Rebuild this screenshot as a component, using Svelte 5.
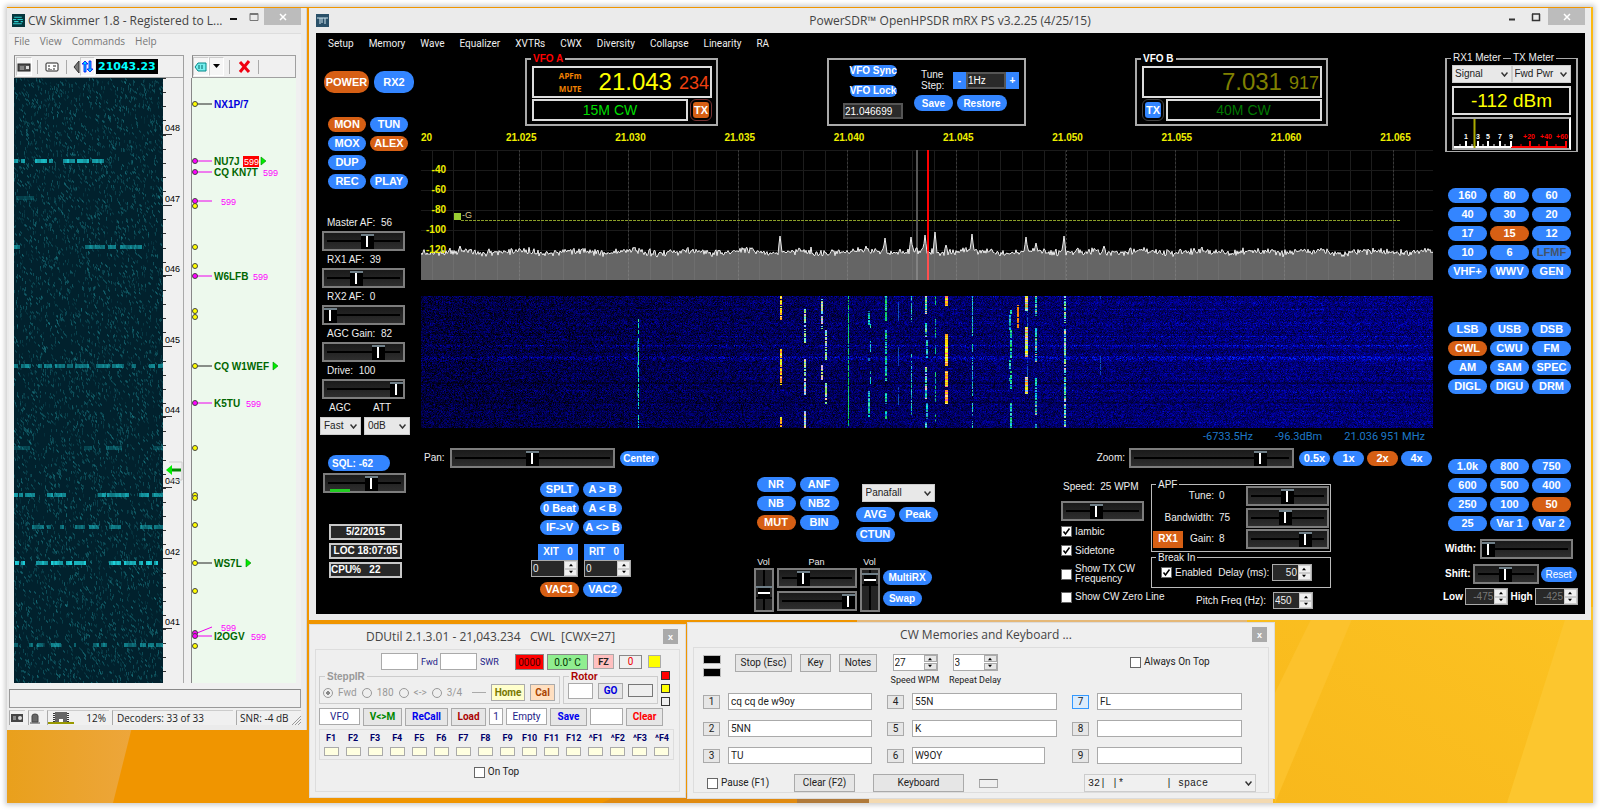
<script>
  import { onMount } from 'svelte'

  const skimMenu = ['File', 'View', 'Commands', 'Help']
  const sdrMenu = ['Setup', 'Memory', 'Wave', 'Equalizer', 'XVTRs', 'CWX', 'Diversity', 'Collapse', 'Linearity', 'RA']

  const modes = ['MON*', 'TUN', 'MOX', 'ALEX*', 'DUP', '', 'REC', 'PLAY']
  const bands = ['160', '80', '60', '40', '30', '20', '17', '15*', '12', '10', '6', 'LFMF-', 'VHF+', 'WWV', 'GEN']
  const demods = ['LSB', 'USB', 'DSB', 'CWL*', 'CWU', 'FM', 'AM', 'SAM', 'SPEC', 'DIGL', 'DIGU', 'DRM']
  const filters = ['1.0k', '800', '750', '600', '500', '400', '250', '100', '50*', '25', 'Var 1', 'Var 2']
  const vfoOps = ['SPLT', 'A > B', '0 Beat', 'A < B', 'IF->V', 'A <> B']
  const noise = ['NR', 'ANF', 'NB', 'NB2', 'MUT*', 'BIN']
  const zooms = ['0.5x', '1x', '2x*', '4x']

  const gains = [
    ['Master AF:', 56, 56],
    ['RX1 AF:', 39, 39],
    ['RX2 AF:', 0, 0],
    ['AGC Gain:', 82, 73],
    ['Drive:', 100, 100]
  ]
  const apf = [
    ['Tune:', 0, 50],
    ['Bandwidth:', 75, 47],
    ['Gain:', 8, 78]
  ]

  const freqs = ['20', '21.025', '21.030', '21.035', '21.040', '21.045', '21.050', '21.055', '21.060', '21.065']
  const levels = [-40, -60, -80, -100, -120]
  const fkeys = ['F1', 'F2', 'F3', 'F4', 'F5', 'F6', 'F7', 'F8', 'F9', 'F10', 'F11', 'F12', '^F1', '^F2', '^F3', '^F4']

  const memories = [
    [['1', 'cq cq de w9oy'], ['4', '55N'], ['7', 'FL']],
    [['2', '5NN'], ['5', 'K'], ['8', '']],
    [['3', 'TU'], ['6', 'W9OY'], ['9', '']]
  ]

  // decoded stations on the band map: y, dot colour, call, report
  const spots = [
    { y: 26, call: 'NX1P/7', fill: '#00d' },
    { y: 83, m: true, call: 'NU7J', report: '599', hot: true, x: 52, arrow: 69 },
    { y: 94, m: true, call: 'CQ KN7T', report: '599', x: 71 },
    { y: 123, m: true, report: '599', x: 29 },
    { y: 128 }, { y: 169 }, { y: 188 },
    { y: 198, m: true, call: 'W6LFB', report: '599', x: 61 },
    { y: 233 }, { y: 239 },
    { y: 288, call: 'CQ W1WEF', arrow: 81 },
    { y: 325, m: true, call: 'K5TU', report: '599', x: 54 },
    { y: 370 }, { y: 417 }, { y: 420 }, { y: 447 },
    { y: 485, call: 'WS7L', arrow: 54 },
    { y: 513 },
    { y: 555, m: true, report: '599', x: 29, up: true },
    { y: 558, m: true, call: 'I2OGV', report: '599', x: 59 },
    { y: 568 }
  ]

  const ticks = Array.from({ length: 43 }, (_, i) => Math.round(i * 14.13))

  let skimCanvas
  let fallCanvas

  function rng(seed) {
    let s = seed
    return () => {
      s = (s * 1664525 + 1013904223) >>> 0
      return s / 4294967296
    }
  }

  // noise floor plus a few carriers
  const peaks = { 359: 16, 445: 6, 464: 14, 490: 15, 504: 17, 514: 20, 525: 7, 551: 18, 605: 15, 615: 9, 643: 16, 683: 6, 39: 6 }
  const trace = (() => {
    const r = rng(7)
    const pts = []
    for (let x = 0; x <= 1012; x += 1) {
      let y = 102 + Math.sin(x / 9) * 1.2 + (r() - 0.5) * 4 + (r() - 0.5) * 5
      if (peaks[x]) y = 102 - peaks[x]
      else if (peaks[x - 1] || peaks[x + 1]) y = 102 - (peaks[x - 1] || peaks[x + 1]) / 2
      pts.push(`${x},${y.toFixed(1)}`)
    }
    return pts.join(' ')
  })()

  const majors = Array.from({ length: 9 }, (_, i) => Math.round(98 + i * 109.3))
  const minors = Array.from({ length: 46 }, (_, i) => Math.round(10.5 + i * 21.86))

  function drawSkimmer() {
    const c = skimCanvas.getContext('2d')
    const r = rng(21)
    c.fillStyle = '#01212d'
    c.fillRect(0, 0, 149, 605)
    for (let i = 0; i < 5600; i++) {
      const x = r() * 149, y = r() * 605
      c.fillStyle = `rgba(30,135,145,${0.1 + r() * 0.36})`
      if (r() < 0.5) c.fillRect(x | 0, y | 0, 1, 2 + r() * 2)
      else {
        c.fillRect(x | 0, y | 0, 1, 2)
        c.fillRect((x | 0) + 1, (y | 0) + 1, 1, 2)
      }
    }
    const keyed = [
      [83, 0.9, [[0, 3], [7, 11], [21, 32], [35, 39], [49, 61], [63, 74], [78, 90]]],
      [169, 0.6, [[0, 6], [71, 91], [94, 102], [106, 127]]],
      [120, 0.25, [[2, 20]]],
      [288, 0.6, [[0, 4], [7, 17], [24, 28], [30, 38], [41, 50], [53, 59], [61, 74], [82, 95], [98, 109], [118, 121], [135, 141], [144, 149]]],
      [370, 0.3, [[0, 16], [70, 78], [92, 108], [139, 149]]],
      [417, 0.75, [[0, 4], [5, 9], [11, 20], [33, 38], [40, 51], [84, 91], [93, 115], [125, 135], [138, 149]]],
      [449, 0.55, [[18, 29], [33, 37], [46, 50], [61, 70], [75, 85], [95, 107], [126, 137], [140, 149]]],
      [485, 1, [[1, 4], [7, 10], [22, 34], [37, 49], [52, 57], [60, 72], [95, 107], [110, 121], [125, 129], [132, 137], [140, 144]]],
      [567, 0.55, [[0, 3], [15, 19], [23, 28], [37, 47], [60, 62], [79, 84], [87, 92], [110, 122], [126, 131], [134, 139], [142, 149]]]
    ]
    for (const [y, a, runs] of keyed) {
      for (const [from, to] of runs) {
        for (let x = from; x < to; x += 2) {
          c.fillStyle = `rgba(30,210,220,${a * (0.6 + r() * 0.4)})`
          c.fillRect(x, y - 2, 2, 4)
        }
      }
    }
  }

  const warm = ['#ffe100', '#ff9a1f', '#ffd000', '#d9ff2e', '#ff7a3c', '#ffe98a']
  const pale = ['#7ff0c8', '#c9e86a', '#b9a6ff', '#5ad0ff', '#ffc8a0', '#7fe060']
  const cool = ['#00d6e8', '#2aa6e0', '#19c07a', '#0f70c0', '#3fe0c0']
  const green = ['#10c83a', '#1ad070', '#00b8a0', '#22e060']
  const dim = ['#0b3cc0', '#0d50b0', '#1060c0']
  const carriers = [
    [217, ['#00e8c0', '#20e0a0', '#00c0f0', '#40f080'], 1, [[23, 38], [42, 86], [88, 113], [119, 132]]],
    [216, dim, 1, [[45, 56], [66, 76], [94, 100]]],
    [359, warm, 2, [[0, 25], [53, 89], [121, 132]]],
    [383, pale, 2, [[13, 47], [63, 99], [115, 132]]],
    [400, pale, 2, [[3, 33], [68, 84]]],
    [404, pale, 2, [[34, 52], [53, 64], [87, 109]]],
    [427, green, 1, [[0, 130]]],
    [447, cool, 2, [[15, 30], [62, 65], [95, 121]]],
    [449, cool, 1, [[28, 32], [45, 57], [75, 88]]],
    [464, green.concat(cool), 2, [[0, 25], [34, 80], [82, 85], [96, 108], [115, 123]]],
    [477, dim, 1, [[6, 26], [50, 70], [90, 110]]],
    [490, cool, 1, [[0, 26], [58, 62], [65, 119]]],
    [504, cool.concat(pale), 2, [[0, 19], [27, 41], [71, 103], [126, 132]]],
    [505, cool, 2, [[44, 62], [107, 123]]],
    [514, dim.concat(green), 1, [[0, 9], [23, 42], [48, 58], [76, 106], [118, 126]]],
    [524, warm.concat('#ff5fa0'), 3, [[0, 10], [38, 70], [75, 91], [94, 108]]],
    [551, cool, 1, [[0, 40], [48, 56], [60, 100], [107, 120], [125, 132]]],
    [588, cool, 2, [[19, 34], [63, 74], [82, 85]]],
    [589, cool.concat(green), 2, [[14, 18], [34, 62], [75, 95], [107, 132]]],
    [596, ['#ff9000', '#e07818', '#ff7800'], 2, [[9, 32]]],
    [604, warm.concat(pale), 3, [[0, 15], [31, 61], [81, 98]]],
    [606, dim, 1, [[15, 31], [62, 81]]],
    [614, cool.concat('#d0b080'), 2, [[0, 21], [31, 67], [82, 119], [128, 132]]],
    [643, cool.concat(pale), 2, [[0, 27], [33, 62], [63, 132]]],
    [679, dim, 1, [[0, 4], [60, 80]]]
  ]

  function drawWaterfall() {
    const c = fallCanvas.getContext('2d')
    const r = rng(99)
    const img = c.createImageData(1012, 132)
    const streaks = { 0: 0.3, 13: 0.1, 27: 0.22, 40: 0.35, 49: 0.35, 50: 0.25, 60: 0.3, 61: 0.4, 62: 0.4, 63: 0.35, 64: 0.25, 86: -0.25, 87: -0.25, 106: -0.2, 107: -0.2, 10: -0.15, 37: -0.2, 94: 0.15 }
    for (let y = 0; y < 132; y++) {
      const row = 0.8 + (r() - 0.5) * 0.2 + (streaks[y] || 0)
      for (let x = 0; x < 1012; x++) {
        const lift = 56 + 60 * Math.min(1, x / 850)
        const v = row * (lift + (r() + r() - 0.9) * 92)
        const i = (y * 1012 + x) * 4
        const b = Math.max(0, Math.min(255, v * 1.2))
        img.data[i] = 0
        img.data[i + 1] = b > 180 ? (b - 180) / 2 : 0
        img.data[i + 2] = b
        img.data[i + 3] = 255
      }
    }
    c.putImageData(img, 0, 0)
    for (const [x, palette, w, runs] of carriers) {
      for (const [from, to] of runs) {
        for (let y = from; y < to; y++) {
          if (w < 3 && r() < 0.15) continue
          c.fillStyle = palette[Math.floor(r() * palette.length)]
          c.fillRect(x, y, w, 1)
        }
      }
    }
  }

  onMount(() => {
    drawSkimmer()
    drawWaterfall()
  })
</script>

{#snippet pill(name)}
  {#if name}
    <button class="pill" class:on={name.endsWith('*')} disabled={name.endsWith('-')}>{name.replace(/[*-]$/, '')}</button>
  {:else}
    <span></span>
  {/if}
{/snippet}

{#snippet slider(label, value)}
  <input class="slider" type="range" min="0" max="100" {value} aria-label={label} />
{/snippet}

{#snippet spin(label, value, off)}
  <span class="spin" class:off>
    <input type="text" {value} aria-label={label} />
    <span class="arrows">
      <button aria-label="{label} up"><svg viewBox="0 0 8 6"><path d="M1 5L4 1L7 5Z" /></svg></button>
      <button aria-label="{label} down"><svg viewBox="0 0 8 6"><path d="M1 1L4 5L7 1Z" /></svg></button>
    </span>
  </span>
{/snippet}

<div class="desktop">
  <svg class="wallpaper" viewBox="0 0 1586 796" preserveAspectRatio="none" aria-hidden="true">
    <defs>
      <linearGradient id="left" x1="0" x2="1">
        <stop offset="0" stop-color="#e9a01c" />
        <stop offset="1" stop-color="#eda63c" />
      </linearGradient>
      <linearGradient id="right" x1="0" y1="1" x2="1" y2="0">
        <stop offset="0" stop-color="#f8b81c" />
        <stop offset="1" stop-color="#fcc322" />
      </linearGradient>
    </defs>
    <rect width="1586" height="796" fill="#f09500" />
    <path d="M0 700H130L106 796H0Z" fill="url(#left)" />
    <path d="M595 796L615 786H790V796Z" fill="#e08a10" />
    <path d="M790 786H862V796H790Z" fill="#b07a3a" />
    <path d="M862 786H1270V796H862Z" fill="#f3d9b0" />
    <path d="M850 600H1260V630H850Z" fill="#e5b878" />
    <path d="M1240 600H1586V786H1270V796H1586V786H1240Z" fill="url(#right)" />
    <path d="M1266 600H1586V796H1266Z" fill="url(#right)" />
    <path d="M1266 690L1310 600H1350L1268 796Z" fill="#fcc22c" />
    <path d="M1562 600H1586V796H1500Z" fill="#fcc62e" />
    <path d="M1583 0H1586V600H1583Z" fill="#fcb912" />
  </svg>

  <section class="win skimmer">
    <header>
      <svg class="app" viewBox="0 0 12 12"><rect width="12" height="12" fill="#05363c" /><path d="M2 3H9M1 5H4M5 5H10M2 7H6M8 7H10M1 9H9" stroke="#2fd0d0" stroke-width="1" /></svg>
      <h2>CW Skimmer 1.8 - Registered to L...</h2>
      <button class="cap" aria-label="Minimize"><svg viewBox="0 0 10 10"><path d="M1 7H8" stroke="#111" stroke-width="2" /></svg></button>
      <button class="cap" aria-label="Maximize"><svg viewBox="0 0 10 10"><path d="M1 1.5H9V8.500H1Z M1 2.500H9" fill="none" stroke="#777" /></svg></button>
      <button class="cap close" aria-label="Close"><svg viewBox="0 0 10 10"><path d="M2 2L8 8M8 2L2 8" stroke="#fff" stroke-width="1.500" /></svg></button>
    </header>
    <div class="skimBody">
      <nav>{#each skimMenu as m}<button>{m}</button>{/each}</nav>
      <div class="tools">
        <div class="toolbar main">
          <button class="down" aria-label="Radio"><svg width="14" height="10" viewBox="0 0 14 10"><rect x="1" y="2" width="12" height="7" fill="#555" stroke="#222" /><path d="M3 5H7M3 7H7" stroke="#bbb" /><rect x="9" y="4" width="3" height="3" fill="#ddd" /></svg></button>
          <i></i>
          <button aria-label="Recorder"><svg width="14" height="10" viewBox="0 0 14 10"><rect x="1" y="1" width="12" height="8" rx="1" fill="#fff" stroke="#222" /><path d="M3 4H5M8 4H11M4 6V8M6 7V8M9 6V8" stroke="#222" /></svg></button>
          <i></i>
          <svg width="8" height="14" viewBox="0 0 8 14"><path d="M7 1L2 7L7 13Z" fill="#777" stroke="#333" /></svg>
          <button class="down" aria-label="Swap"><svg width="13" height="13" viewBox="0 0 13 13"><path d="M4 1L1 4H3V12H5V4H7Z" fill="#0cf" stroke="#00f" stroke-width=".8" /><path d="M9 12L6 9H8V1H10V9H12Z" fill="#0cf" stroke="#00f" stroke-width=".8" /></svg></button>
          <output>21043.23</output>
        </div>
        <div class="toolbar">
          <button class="down" aria-label="Tag"><svg width="14" height="10" viewBox="0 0 14 10"><path d="M1 5L4 1H12V9H4Z" fill="#7ee" stroke="#088" /><path d="M4 4H10M4 6H10" stroke="#066" stroke-dasharray="2 1" /></svg></button>
          <button class="down" aria-label="Tag menu"><svg width="7" height="5" viewBox="0 0 7 5"><path d="M0 0H7L3.500 4Z" /></svg></button>
          <i></i>
          <button aria-label="Delete"><svg width="13" height="13" viewBox="0 0 13 13"><path d="M2 2L11 12M11 1L2 12" stroke="#f00010" stroke-width="3" /></svg></button>
          <i></i>
        </div>
      </div>
      <div class="maps">
        <canvas bind:this={skimCanvas} width="149" height="605"></canvas>
        <svg class="scale" viewBox="0 0 20 605">
          {#each ticks as t}<path d="M0 {t + 0.5}H3" stroke="#333" />{/each}
          {#each ['048', '047', '046', '045', '044', '043', '042', '041'] as t, i}
            <path d="M0 {Math.round(56 + i * 70.6) + 0.5}H9" stroke="#333" />
            <text x="2" y={Math.round(53 + i * 70.6)}>{t}</text>
          {/each}
          <path d="M6 384H19V402H6" fill="none" stroke="#ccc" />
          <path d="M3 392L9 387V397Z" fill="#0e0" /><path d="M9 392H18" stroke="#080" stroke-width="3" />
        </svg>
        <svg class="spots" viewBox="0 0 104 605">
          {#each spots as s}
            {#if s.call || s.report}
              <path d={s.up ? `M5 ${s.y}L20 ${s.y - 6}` : `M5 ${s.y}H20`} stroke={s.m ? '#e0e' : '#222'} />
            {/if}
            <circle cx="3" cy={s.y} r="2.500" fill={s.m ? '#f0f' : '#ff0'} stroke="#444" />
            {#if s.call}<text class="call" x="22" y={s.y + 4} fill={s.fill ?? '#060'}>{s.call}</text>{/if}
            {#if s.hot}<rect x="51" y={s.y - 5} width="16" height="11" fill="#f00" />{/if}
            {#if s.report}<text x={s.x} y={s.up ? s.y - 2 : s.y + 4} fill={s.hot ? '#fff' : '#f0f'} style:font-size="9px">{s.report}</text>{/if}
            {#if s.arrow}<path d="M{s.arrow} {s.y - 4}L{s.arrow + 5} {s.y}L{s.arrow} {s.y + 4}Z" fill="#0e0" stroke="#080" stroke-width=".6" />{/if}
          {/each}
        </svg>
      </div>
      <div class="well"></div>
      <footer>
        <span><svg width="14" height="10" viewBox="0 0 14 10"><rect x="1" y="1" width="12" height="8" fill="#444" /><path d="M3 4H6M3 6H6" stroke="#ccc" /><circle cx="10" cy="5" r="2" fill="#ddd" /></svg></span>
        <span><svg width="12" height="11" viewBox="0 0 12 11"><path d="M1 10H11M3 9V3Q3 1 6 1Q9 1 9 3V9Z" fill="#666" stroke="#444" /></svg></span>
        <span class="cpu"><svg width="26" height="12" viewBox="0 0 26 12"><path d="M0 11H26" stroke="#990" stroke-width="2" /><path d="M7 0V10H19V0Z" fill="#666" /><path d="M6 1V10M20 1V10" stroke="#333" stroke-width="2" stroke-dasharray="1 1" /><path d="M11 10V7H15V10Z" fill="#fff" /></svg>12%</span>
        <span class="dec">Decoders: 33 of 33</span>
        <span class="snr">SNR: -4 dB<svg class="grip" width="10" height="10" viewBox="0 0 10 10"><path d="M1 10L10 1M4 10L10 4M7 10L10 7" stroke="#999" /></svg></span>
      </footer>
    </div>
  </section>

  <div class="rest">
    <section class="win sdr">
      <header>
        <svg class="app" viewBox="0 0 13 13"><rect width="13" height="13" fill="#2a5068" /><path d="M1 4H12M4 4V10M6 4V9M9 4V10" stroke="#cfe4ee" fill="none" /></svg>
        <h2>PowerSDR™ OpenHPSDR mRX PS v3.2.25 (4/25/15)</h2>
        <button class="cap" aria-label="Minimize"><svg viewBox="0 0 10 10"><path d="M2 7.500H8" stroke="#333" stroke-width="2" /></svg></button>
        <button class="cap" aria-label="Maximize"><svg viewBox="0 0 10 10"><path d="M1.500 2V8.500H8.500V2M1 2H9" fill="none" stroke="#333" stroke-width="1.500" /></svg></button>
        <button class="cap close" aria-label="Close"><svg viewBox="0 0 10 10"><path d="M2 2L8 8M8 2L2 8" stroke="#fff" stroke-width="1.500" /></svg></button>
      </header>
      <div class="console">
        <nav>{#each sdrMenu as m}<button>{m}</button>{/each}</nav>
        <div class="columns">
          <div class="left">
            <div class="power"><button class="pill on">POWER</button><button class="pill">RX2</button></div>
            <div class="pair modes">{#each modes as b}{@render pill(b)}{/each}</div>
            <div class="gains">
              {#each gains as [name, shown, pos]}
                <span>{name}&nbsp; {shown}</span>
                {@render slider(name, pos)}
              {/each}
            </div>
            <div class="agc">
              <label for="agc">AGC</label><label for="att">ATT</label>
              <select id="agc"><option>Fast</option></select>
              <select id="att"><option>0dB</option></select>
            </div>
            <div class="sql">
              <button class="pill">SQL: -62</button>
              <div class="sqlbar">{@render slider('Squelch', 61)}</div>
            </div>
            <div class="clock">
              <output>5/2/2015</output>
              <output>LOC 18:07:05</output>
              <output class="cpuload">CPU%&nbsp;&nbsp; 22</output>
            </div>
          </div>

          <div class="center">
            <div class="vfos">
              <fieldset class="vfo">
                <legend class="red">VFO A</legend>
                <div class="freq"><small>APFm<br />MUTE</small><b>21.043</b><em>234</em></div>
                <div class="band"><output>15M CW</output><button class="tx on">TX</button></div>
              </fieldset>
              <div class="memory">
                <div class="locks">
                  <button class="pill">VFO Sync</button>
                  <button class="pill">VFO Lock</button>
                  <input type="text" value="21.046699" aria-label="Saved frequency" />
                </div>
                <div class="tune">
                  <div class="step"><span>Tune<br />Step:</span><button>-</button><input type="text" value="1Hz" aria-label="Tune step" /><button>+</button></div>
                  <div class="save"><button class="pill">Save</button><button class="pill wide">Restore</button></div>
                </div>
              </div>
              <fieldset class="vfo b">
                <legend>VFO B</legend>
                <div class="freq"><b>7.031</b><em>917</em></div>
                <div class="band"><button class="tx">TX</button><output>40M CW</output></div>
              </fieldset>
            </div>

            <div class="freqs">{#each freqs as f}<span>{f}</span>{/each}</div>
            <div class="pan">
              <svg viewBox="0 0 1012 130" preserveAspectRatio="none">
                {#each minors as x}<path d="M{x + 0.5} 0V130" stroke="#1d1d1d" />{/each}
                {#each [0.5, 20.5, 40.5, 60.5, 80.5, 100.5] as y}<path d="M0 {y}H1012" stroke="#1a1a1a" />{/each}
                {#each majors as x}<path d="M{x + 0.5} 0V130" stroke="#3a3a3a" stroke-dasharray="2 2" />{/each}
                <path d="M40 70.500H979" stroke="#8a9e28" stroke-dasharray="3 1" />
                <rect x="33" y="63" width="7" height="7" fill="#9acd32" />
                <path d="M496 0V130" stroke="#555" stroke-width="2" />
                <polygon points="0,130 {trace} 1012,130" fill="#999" fill-opacity=".66" />
                <polyline points={trace} fill="none" stroke="#eee" />
                <path d="M507 0V130" stroke="#f00" stroke-width="2" />
                <path d="M507 101V130" stroke="#ff5050" stroke-width="2" />
              </svg>
              <div class="levels">{#each levels as l}<span>{l}</span>{/each}</div>
              <span class="gmark">-G</span>
            </div>
            <canvas class="fall" bind:this={fallCanvas} width="1012" height="132"></canvas>
            <div class="readout"><span>-6733.5Hz</span><span>-96.3dBm</span><span>21.036 951 MHz</span></div>

            <div class="panzoom">
              <span>Pan:</span>{@render slider('Pan', 50)}<button class="pill">Center</button>
              <span class="zl">Zoom:</span>{@render slider('Zoom', 83)}
              <div class="zooms">{#each zooms as b}{@render pill(b)}{/each}</div>
            </div>

            <div class="lower">
              <div class="ops">
                <div class="pair">{#each vfoOps as b}{@render pill(b)}{/each}</div>
                <div class="rits">
                  {#each ['XIT', 'RIT'] as n}
                    <div><button class="rit">{n}&nbsp;&nbsp;&nbsp;0</button>{@render spin(n, '0')}</div>
                  {/each}
                </div>
                <div class="pair vac">{@render pill('VAC1*')}{@render pill('VAC2')}</div>
              </div>

              <div class="dsp">
                <div class="dspTop">
                  <div class="pair">{#each noise as b}{@render pill(b)}{/each}</div>
                  <div class="display">
                    <select aria-label="Display"><option>Panafall</option></select>
                    <div class="pair">{@render pill('AVG')}{@render pill('Peak')}</div>
                    {@render pill('CTUN')}
                  </div>
                </div>
                <div class="mixer">
                  <div class="vol"><span>Vol</span><input class="slider vert" type="range" value="40" aria-label="Main volume" /></div>
                  <div class="pans"><span>Pan</span>{@render slider('Main pan', 29)}{@render slider('Sub pan', 100)}</div>
                  <div class="vol"><span>Vol</span><input class="slider vert" type="range" value="90" aria-label="Sub volume" /></div>
                  <div class="multi"><button class="pill">MultiRX</button><button class="pill swap">Swap</button></div>
                </div>
              </div>

              <div class="cw">
                <div class="keyer">
                  <span>Speed:&nbsp; 25 WPM</span>
                  {@render slider('Speed', 41)}
                  <label><input type="checkbox" checked />Iambic</label>
                  <label><input type="checkbox" checked />Sidetone</label>
                  <label class="two"><input type="checkbox" />Show TX CW Frequency</label>
                  <label class="one"><input type="checkbox" />Show CW Zero Line</label>
                </div>
                <div class="filtering">
                  <fieldset class="apf">
                    <legend>APF</legend>
                    {#each apf as [name, v, pos]}
                      <div>{#if name === 'Gain:'}<button>RX1</button>{/if}<span class="n">{name}</span><span class="v">{v}</span>{@render slider(name, pos)}</div>
                    {/each}
                  </fieldset>
                  <fieldset class="breakin">
                    <legend>Break In</legend>
                    <label><input type="checkbox" checked />Enabled</label>
                    <span>Delay (ms):</span>{@render spin('Delay', '50')}
                  </fieldset>
                  <div class="pitch"><span>Pitch Freq (Hz):</span>{@render spin('Pitch', '450')}</div>
                </div>
              </div>
            </div>
          </div>

          <div class="right">
            <fieldset class="meter">
              <legend>RX1 Meter</legend><legend class="txm">TX Meter</legend>
              <div class="pick">
                <select aria-label="RX1 meter"><option>Signal</option></select>
                <select aria-label="TX meter"><option>Fwd Pwr</option></select>
              </div>
              <output>-112 dBm</output>
              <svg viewBox="0 0 115 29">
                <path d="M0 28H57" stroke="#fff" stroke-width="2" /><path d="M57 28H113" stroke="#f00" stroke-width="2" />
                <path d="M12 22V28M24 22V28M34 22V28M46 22V28M57 22V28" stroke="#fff" stroke-width="2" />
                <path d="M6 25V28M18 25V28M29 25V28M40 25V28M51 25V28" stroke="#fff" />
                <path d="M76 22V28M93 22V28M112 22V28" stroke="#f00" stroke-width="2" />
                <path d="M67 25V28M85 25V28M102 25V28" stroke="#f00" />
                {#each [['1', 12], ['3', 24], ['5', 34], ['7', 46], ['9', 57]] as [t, x]}<text {x} y="20" fill="#fff">{t}</text>{/each}
                {#each [['+20', 75], ['+40', 92], ['+60', 108]] as [t, x]}<text {x} y="20" fill="#f00">{t}</text>{/each}
                <path d="M20.500 0V29" stroke="#aa0" stroke-width="2" />
              </svg>
            </fieldset>
            <div class="triple bands">{#each bands as b}{@render pill(b)}{/each}</div>
            <div class="triple demods">{#each demods as b}{@render pill(b)}{/each}</div>
            <div class="triple filters">{#each filters as b}{@render pill(b)}{/each}</div>
            <div class="line width"><b>Width:</b>{@render slider('Width', 0)}</div>
            <div class="line shift"><b>Shift:</b>{@render slider('Shift', 50)}<button class="pill">Reset</button></div>
            <div class="line lowhigh"><b>Low</b>{@render spin('Low', '-475', true)}<b>High</b>{@render spin('High', '-425', true)}</div>
          </div>
        </div>
      </div>
    </section>

    <div class="bottom">
      <section class="win ddutil">
        <header><h2>DDUtil 2.1.3.01 - 21,043.234 &nbsp; CWL &nbsp;[CWX=27]</h2><button class="x" aria-label="Close">x</button></header>
        <div class="panel">
          <div class="row1">
            <input type="text" aria-label="Forward power" /><span>Fwd</span>
            <input type="text" aria-label="SWR" /><span>SWR</span>
            <output class="fault">0000</output><output class="temp">0.0° C</output>
            <button class="fz">FZ</button><output class="zero">0</output><i class="lamp yel"></i>
          </div>
          <div class="row2">
            <fieldset class="stepp" disabled>
              <legend>SteppIR</legend>
              <label><input type="radio" name="dir" checked />Fwd</label>
              <label><input type="radio" name="dir" />180</label>
              <label><input type="radio" name="dir" />&lt;-&gt;</label>
              <label><input type="radio" name="dir" />3/4</label>
              <span class="dash"></span>
              <button class="home">Home</button><button class="cal">Cal</button>
            </fieldset>
            <fieldset class="rotor">
              <legend>Rotor</legend>
              <input type="text" aria-label="Heading" /><button>GO</button><output></output>
            </fieldset>
            <div class="lamps"><i class="red"></i><i class="yel"></i><i></i></div>
          </div>
          <div class="row3">
            <input class="w42" type="text" value="VFO" aria-label="Source" />
            <button class="w39 grn">V&lt;&gt;M</button>
            <button class="w43 blu">ReCall</button>
            <button class="w35 drk">Load</button>
            <input class="w14" type="text" value="1" aria-label="Slot" />
            <input class="w42" type="text" value="Empty" aria-label="Slot name" />
            <button class="w37 blu">Save</button>
            <input class="w33" type="text" aria-label="New name" />
            <button class="w37 rd">Clear</button>
          </div>
          <div class="fkeys">{#each fkeys as f}<label>{f}<button aria-label={f}></button></label>{/each}</div>
          <label class="ontop"><input type="checkbox" />On Top</label>
        </div>
      </section>

      <section class="win cwmem">
        <header><h2>CW Memories and Keyboard ...</h2><button class="x" aria-label="Close">x</button></header>
        <div class="panel">
          <div class="top">
            <div class="bars"><i></i><i></i></div>
            <button class="w57">Stop (Esc)</button><button class="w31">Key</button><button class="w38">Notes</button>
            <div class="wpm">{@render spin('Speed WPM', '27')}<span>Speed WPM</span></div>
            <div class="rep">{@render spin('Repeat Delay', '3')}<span>Repeat Delay</span></div>
            <label class="always"><input type="checkbox" />Always On Top</label>
          </div>
          {#each memories as row}
            <div class="mem">
              {#each row as [n, text]}
                <div class:focus={n === '7'} class:short={n === '6'}><button>{n}</button><input type="text" value={text} aria-label="Memory {n}" /></div>
              {/each}
            </div>
          {/each}
          <div class="last">
            <label><input type="checkbox" />Pause (F1)</label>
            <button class="clr">Clear (F2)</button>
            <button class="kbd">Keyboard</button>
            <i></i>
            <select aria-label="Character buffer"><option>32| |*&nbsp;&nbsp;&nbsp;&nbsp;&nbsp;&nbsp;&nbsp;| space</option></select>
          </div>
        </div>
      </section>
    </div>
  </div>
</div>

<style>
  :global(body) {
    margin: 0;
    background: #fff;
  }

  .desktop, .desktop :global(*) {
    box-sizing: border-box;
  }

  .desktop {
    position: relative;
    display: flex;
    align-items: flex-start;
    gap: 2px;
    margin: 7px;
    padding: 1px 2px 0 0;
    box-shadow: 0 0 5px 2px #ccc;
    font: 10px/12px Roboto, "Liberation Sans", sans-serif;
    color: #222;
  }

  .wallpaper {
    position: absolute;
    inset: 0;
    width: 100%;
    height: 100%;
  }

  button, input, select {
    margin: 0;
    padding: 0;
    border: 0;
    border-radius: 0;
    font: inherit;
    color: inherit;
  }

  fieldset {
    position: relative;
    min-width: 0;
    margin: 0;
    padding: 0;
  }

  legend {
    position: absolute;
    top: -7px;
    padding: 0 2px;
    line-height: 12px;
  }

  h2 {
    flex: 1;
    min-width: 0;
    margin: 0;
    font: 12px/16px "Open Sans", sans-serif;
    color: #444;
    white-space: nowrap;
  }

  .win {
    position: relative;
    background: #ebebeb;
  }

  header {
    display: flex;
    align-items: flex-start;
    height: 25px;
  }

  .app {
    width: 13px;
    height: 13px;
  }

  .cap {
    display: grid;
    place-items: center;
    width: 24px;
    height: 17px;
    background: none;
  }

  .cap svg {
    width: 10px;
    height: 10px;
  }

  .close {
    width: 37px;
    background: #bcbcbc;
  }

  nav {
    display: flex;
  }

  nav button {
    background: none;
  }

  /* CW Skimmer */
  .skimmer {
    flex: 0 0 300px;
    min-width: 0;
    height: 722px;
    padding: 0 5px 6px 2px;
    border-right: 1px solid #d4d4d4;
  }

  .skimmer header {
    padding-left: 3px;
  }

  .skimmer .app {
    margin: 6px 3px 0 0;
    flex: none;
  }

  .skimmer h2 {
    padding-top: 5px;
  }

  .skimmer .cap {
    width: 20px;
  }

  .skimmer .close {
    width: 37px;
  }

  .skimBody {
    border-top: 1px solid #ddd;
    background: #f0f0f0;
  }

  .skimBody nav {
    align-items: flex-start;
    gap: 10px;
    height: 21px;
    padding-left: 5px;
    font: 10px/15px "Open Sans", sans-serif;
    color: #777;
  }

  .tools {
    display: flex;
    justify-content: space-between;
    padding: 0 5px;
  }

  .toolbar {
    display: flex;
    align-items: center;
    width: 104px;
    height: 23px;
    border: 1px solid #a0a0a0;
    border-left-color: #888;
  }

  .toolbar.main {
    width: 170px;
    padding-left: 1px;
  }

  .toolbar button {
    display: grid;
    place-items: center;
    min-width: 18px;
    height: 19px;
    background: none;
  }

  .toolbar .down {
    min-width: 15px;
    border: 1px solid #ccc;
    border-right-color: #fff;
    border-bottom-color: #fff;
    background: #f6f6f6;
  }

  .toolbar i {
    width: 1px;
    height: 14px;
    margin: 0 5px;
    background: #aaa;
  }

  .toolbar output {
    margin-left: 1px;
    padding: 0 2px;
    background: #000;
    color: #0ff;
    font: bold 11px/15px "DejaVu Sans", sans-serif;
  }

  .maps {
    display: flex;
    padding: 0 5px;
  }

  .maps canvas {
    flex: 0 0 149px;
    height: 605px;
  }

  .maps svg {
    flex: none;
    height: 605px;
  }

  .maps .scale {
    width: 21px;
    border-right: 1px solid #aaa;
  }

  .scale text, .spots text {
    font: 10px "Liberation Sans", sans-serif;
  }

  .scale text {
    font-size: 9px;
  }

  .maps .spots {
    width: 105px;
    margin-left: auto;
    border-left: 1px solid #888;
    background: #edf9ed;
  }

  .spots .call {
    font-weight: bold;
    font-size: 10px;
  }

  .well {
    height: 19px;
    margin: 6px 0 2px;
    border: 1px solid #999;
    border-top-color: #888;
  }

  footer {
    display: flex;
    gap: 3px;
    font: 10px/13px "Open Sans", sans-serif;
  }

  footer span {
    display: flex;
    align-items: center;
    width: 16px;
    height: 15px;
    border-left: 1px solid #aaa;
    border-top: 1px solid #ccc;
  }

  footer .cpu {
    justify-content: space-between;
    width: 62px;
    padding-right: 3px;
  }

  footer .dec {
    width: 121px;
    padding-left: 4px;
  }

  footer .snr {
    flex: 1;
    padding-left: 3px;
    white-space: nowrap;
  }

  .grip {
    align-self: flex-end;
    margin-left: auto;
  }

  /* PowerSDR */
  .rest {
    position: relative;
    flex: 1;
    min-width: 0;
  }

  .sdr {
    padding: 0 6px 6px 7px;
  }

  .sdr .app {
    margin-top: 6px;
  }

  .sdr h2 {
    padding: 5px 0 0 71px;
    text-align: center;
  }

  .console {
    background: #000;
    color: #eee;
    font-family: "Liberation Sans", Arial, sans-serif;
  }

  .console nav {
    gap: 15px;
    height: 21px;
    padding-left: 12px;
    font-family: Roboto, sans-serif;
  }

  .columns {
    display: flex;
    height: 560px;
  }

  .left {
    flex: 0 0 105px;
    padding: 17px 0 0 6px;
  }

  .center {
    flex: 1;
    min-width: 0;
    padding-top: 4px;
  }

  .right {
    flex: 0 0 152px;
    padding: 4px 7px 0 12px;
  }

  .pill {
    height: 15px;
    border-radius: 8px;
    background: #3385ff;
    color: #fff;
    font-weight: bold;
    font-size: 11px;
    line-height: 15px;
    text-align: center;
    white-space: nowrap;
  }

  .pill.on {
    background: #d65f14;
  }

  .pill:disabled {
    color: #44546a;
  }

  .pair {
    display: grid;
    grid-template-columns: 38px 38px;
    gap: 4px;
  }

  .power {
    display: flex;
    gap: 5px;
    padding-left: 2px;
    margin-bottom: 24px;
  }

  .power .pill {
    width: 40px;
    height: 22px;
    border-radius: 10px;
  }

  .power .on {
    width: 45px;
  }

  .modes {
    margin: 0 0 25px 6px;
  }

  .gains {
    display: grid;
  }

  .gains span {
    padding: 3px 0 2px 5px;
  }

  .slider {
    appearance: none;
    width: 83px;
    height: 20px;
    border: 2px solid #7d7d7d;
    background: linear-gradient(transparent 7px, #000 7px, #000 9px, transparent 9px) 3px 0 / calc(100% - 6px) 100% no-repeat, linear-gradient(#1a1a1a, #2e2e2e);
  }

  .slider::-webkit-slider-thumb {
    appearance: none;
    width: 13px;
    height: 15px;
    border-top: 2px solid #6f7f88;
    background: linear-gradient(90deg, #000 5px, #fff 5px, #fff 7px, #000 7px);
    box-shadow: inset 0 -2px #000;
  }

  .slider.vert {
    writing-mode: vertical-lr;
    direction: rtl;
    width: 20px;
    height: 44px;
    background: linear-gradient(90deg, transparent 7px, #000 7px, #000 9px, transparent 9px), #242424;
  }

  .slider.vert::-webkit-slider-thumb {
    width: 16px;
    height: 13px;
    background: linear-gradient(#000 4px, #fff 4px, #fff 6px, #000 6px);
    background-size: 12px 100%;
    background-repeat: no-repeat;
    background-position: 2px 0;
  }

  select {
    appearance: none;
    height: 18px;
    padding-left: 3px;
    border: 1px solid #ccc;
    background: #e8e8e8 url('data:image/svg+xml,<svg xmlns="http://www.w3.org/2000/svg" width="7" height="5"><path d="M.5 .5L3.5 4L6.5 .5" fill="none" stroke="%23333" stroke-width="1.5"/></svg>') no-repeat right 3px center;
    color: #222;
  }

  .agc {
    display: grid;
    grid-template-columns: 41px 46px;
    gap: 0 3px;
    margin-left: -2px;
  }

  .agc label {
    padding: 3px 0 3px 9px;
  }

  .sql {
    padding: 20px 0 0 1px;
  }

  .sql .pill {
    display: block;
    width: 62px;
    height: 16px;
    margin: 0 0 2px 5px;
    padding-left: 4px;
    text-align: left;
    font-size: 10px;
  }

  .sqlbar {
    display: flex;
    position: relative;
  }

  .sqlbar::after {
    content: '';
    position: absolute;
    left: 7px;
    bottom: 1px;
    width: 20px;
    height: 3px;
    background: #2c2;
  }

  .clock {
    display: grid;
    gap: 3px;
    width: 73px;
    margin: 31px 0 0 7px;
  }

  .clock output {
    height: 16px;
    border: 2px solid #c8c8c8;
    background: #282828;
    color: #fff;
    font-weight: bold;
    text-align: center;
    white-space: nowrap;
  }

  .clock .cpuload {
    text-align: left;
  }

  .vfos {
    display: flex;
    justify-content: space-between;
    height: 68px;
    padding: 0 105px 0 104px;
  }

  .vfo {
    width: 193px;
    padding: 6px 4px 0 5px;
    border: 2px solid #aaa;
  }

  .console legend {
    left: 4px;
    background: #000;
  }

  .vfo legend {
    color: #fff;
    font-weight: bold;
  }

  .vfo .red {
    color: #f00;
  }

  .freq {
    display: flex;
    align-items: center;
    justify-content: flex-end;
    width: 180px;
    height: 32px;
    border: 2px solid #ddd;
    line-height: 28px;
  }

  .freq small {
    margin-right: 17px;
    color: #f08000;
    font: bold 8px/13px "Noto Sans", sans-serif;
  }

  .freq b {
    margin-right: 7px;
    color: #ff0;
    font-weight: normal;
    font-size: 24px;
  }

  .freq em {
    padding: 2px 1px 0 0;
    color: #f04010;
    font-style: normal;
    font-size: 18px;
  }

  .band {
    display: flex;
    gap: 2px;
    margin-top: 1px;
    font-size: 14px;
  }

  .band output {
    width: 156px;
    height: 22px;
    border: 2px solid #ddd;
    color: #0d0;
    line-height: 18px;
    text-align: center;
  }

  .tx {
    width: 22px;
    height: 22px;
    border: 3px solid #000;
    outline: 1px solid #444;
    outline-offset: -1px;
    border-radius: 6px;
    background: #3385ff;
    color: #fff;
    font-weight: bold;
    font-size: 11px;
  }

  .tx.on {
    background: #d65f14;
    outline-color: #733;
  }

  .vfo.b .freq b, .vfo.b .freq em {
    color: #808000;
  }

  .vfo.b output {
    padding-right: 1px;
    color: #070;
  }

  .memory {
    display: flex;
    width: 199px;
    padding: 5px;
    border: 2px solid #aaa;
  }

  .locks {
    display: flex;
    flex-direction: column;
    align-items: center;
    width: 73px;
    padding-left: 5px;
  }

  .locks .pill {
    width: 47px;
    height: 12px;
    margin-bottom: 8px;
    font-size: 10px;
    line-height: 12px;
  }

  .memory input {
    width: 60px;
    height: 17px;
    border: 2px solid #555;
    background: #2a2a2a;
    color: #fff;
  }

  .locks input {
    margin-top: -2px;
  }

  .tune {
    padding-left: 7px;
  }

  .step {
    display: flex;
    align-items: center;
    height: 30px;
    padding-left: 7px;
    line-height: 11px;
  }

  .step span {
    width: 32px;
  }

  .step button {
    width: 13px;
    height: 17px;
    background: #3385ff;
    color: #fff;
    font-weight: bold;
  }

  .memory .step input {
    width: 40px;
  }

  .save {
    display: flex;
    gap: 4px;
  }

  .save .pill {
    width: 39px;
    height: 16px;
    font-size: 10px;
  }

  .save .wide {
    width: 50px;
  }

  .freqs {
    display: flex;
    color: #ee0;
    font-weight: bold;
  }

  .freqs span {
    flex: 0 0 10.8%;
    line-height: 24px;
    text-align: center;
  }

  .freqs span:first-child {
    flex-basis: 4.5%;
    text-align: left;
  }

  .pan {
    position: relative;
    height: 130px;
    margin-bottom: 16px;
  }

  .pan svg {
    display: block;
    width: 100%;
    height: 130px;
  }

  .levels {
    position: absolute;
    top: 10px;
    left: 0;
    display: grid;
    width: 25px;
    color: #ee0;
    font-weight: bold;
    line-height: 20px;
    text-align: right;
  }

  .gmark {
    position: absolute;
    top: 59px;
    left: 41px;
    color: #d8c890;
    font-size: 9px;
  }

  .fall {
    display: block;
    width: 100%;
    height: 132px;
  }

  .readout {
    display: flex;
    justify-content: flex-end;
    gap: 22px;
    height: 20px;
    padding-right: 8px;
    color: #1e78c8;
    font: 11px/18px Roboto, sans-serif;
  }

  .panzoom {
    display: flex;
    align-items: center;
    height: 20px;
  }

  .panzoom span {
    padding: 0 5px 0 3px;
  }

  .panzoom > .slider, .panzoom > :global(.slider) {
    width: 165px;
  }

  .panzoom > .pill {
    width: 39px;
    margin-left: 5px;
    font-size: 10px;
  }

  .panzoom .zl {
    margin-left: auto;
    padding-right: 4px;
  }

  .zooms {
    display: grid;
    grid-template-columns: repeat(4, 31px);
    gap: 3px;
    margin: 0 1px 0 5px;
  }

  .lower {
    display: flex;
    justify-content: space-between;
    padding: 0 102px 0 110px;
  }

  .ops {
    width: 100px;
    padding-top: 14px;
  }

  .ops .pair {
    margin-left: 9px;
    grid-template-columns: 39px 39px;
  }

  .rits {
    display: flex;
    gap: 6px;
    margin: 9px 0 5px;
  }

  .rits div {
    width: 47px;
  }

  .rit {
    width: 40px;
    height: 16px;
    background: #3385ff;
    color: #fff;
    font-weight: bold;
  }

  .rits div:first-child .rit {
    margin-left: 7px;
  }

  .spin {
    display: flex;
    width: 47px;
    height: 17px;
    border: 1px solid #aaa;
    background: #282828;
    color: #eee;
  }

  .spin input {
    flex: 1;
    width: 0;
    padding: 0 1px;
    background: none;
  }

  .spin.off input {
    color: #777;
    text-align: right;
  }

  .arrows {
    display: grid;
    width: 13px;
  }

  .arrows button {
    display: grid;
    place-items: center;
    border: 1px solid #ccc;
    background: #f0f0f0;
  }

  .arrows svg {
    width: 6px;
    height: 4px;
  }

  .dsp {
    width: 185px;
    padding-top: 9px;
  }

  .dspTop {
    display: flex;
    height: 79px;
    gap: 17px;
    padding-left: 3px;
  }

  .dsp .pair {
    grid-template-columns: 39px 39px;
    align-content: start;
  }

  .display {
    padding-top: 7px;
  }

  .display select {
    width: 73px;
    margin: 0 0 5px 6px;
  }

  .display .pair {
    margin-bottom: 5px;
  }

  .display > .pill, .display > :global(.pill) {
    width: 39px;
  }

  .mixer {
    display: flex;
    gap: 3px;
    font-size: 9px;
  }

  .vol, .pans {
    display: flex;
    flex-direction: column;
    align-items: center;
    line-height: 12px;
  }

  .pans :global(.slider) {
    width: 80px;
    margin-bottom: 3px;
  }

  .multi {
    display: grid;
    align-content: start;
    gap: 6px;
    padding-top: 14px;
  }

  .multi .pill {
    width: 49px;
    font-size: 10px;
  }

  .multi .swap {
    width: 39px;
  }

  .cw {
    display: flex;
    width: 270px;
    padding-top: 13px;
  }

  .keyer {
    display: flex;
    flex-direction: column;
    flex: 0 0 90px;
    min-width: 0;
  }

  .keyer > span {
    padding: 0 0 8px 2px;
  }

  label {
    display: flex;
    align-items: center;
  }

  .keyer label {
    height: 19px;
    line-height: 10px;
  }

  .keyer label:nth-of-type(1) {
    margin-top: 1px;
  }

  .keyer .two {
    height: 28px;
  }

  .keyer .one {
    height: 18px;
    white-space: nowrap;
  }

  input[type='checkbox'] {
    appearance: none;
    flex: none;
    width: 11px;
    height: 11px;
    margin-right: 3px;
    border: 1px solid #666;
    background: #fff;
  }

  input[type='checkbox']:checked {
    background: #fff url('data:image/svg+xml,<svg xmlns="http://www.w3.org/2000/svg" width="9" height="9"><path d="M1.500 4.500L3.500 7L7.500 1.500" fill="none" stroke="%23000" stroke-width="1.500"/></svg>') no-repeat center;
  }

  .filtering {
    flex: 0 0 180px;
    padding-top: 3px;
  }

  .apf {
    display: grid;
    gap: 1px;
    height: 68px;
    padding: 1px;
    border: 1px solid #bbb;
  }

  .apf div {
    display: flex;
    align-items: center;
    justify-content: flex-end;
    height: 20px;
  }

  .apf button {
    width: 30px;
    height: 17px;
    margin-right: auto;
    background: #d65f14;
    color: #fff;
    font-weight: bold;
  }

  .apf .n {
    margin-right: 5px;
  }

  .apf .v {
    width: 27px;
  }

  .apf legend, .breakin legend {
    top: -6px;
  }

  .breakin {
    display: flex;
    align-items: center;
    justify-content: space-between;
    height: 31px;
    margin-top: 5px;
    padding: 0 18px 0 9px;
    border: 1px solid #bbb;
  }

  .breakin span {
    margin-left: 4px;
  }

  .breakin :global(.spin), .pitch :global(.spin) {
    width: 40px;
  }

  .breakin :global(.spin), .breakin :global(.spin span) {
    margin-left: 0;
  }

  .breakin :global(.spin input) {
    text-align: right;
  }

  .pitch {
    display: flex;
    align-items: center;
    justify-content: flex-end;
    gap: 7px;
    padding: 4px 18px 0 0;
  }

  .meter {
    width: 133px;
    height: 94px;
    padding: 6px 5px 0;
    border: 2px solid #aaa;
    border-width: 1px 2px;
  }

  .meter .txm {
    left: 64px;
  }

  .pick {
    display: grid;
    grid-template-columns: 1fr 1fr;
    margin-bottom: 3px;
  }

  .pick select {
    padding-left: 2px;
  }

  .meter output {
    display: block;
    height: 29px;
    margin-bottom: 2px;
    border: 2px solid #ddd;
    color: #ff0;
    font-size: 19px;
    line-height: 26px;
    text-align: center;
  }

  .meter svg {
    display: block;
    width: 100%;
    height: 33px;
    border: 2px solid #aaa;
    border-right-color: #fff;
  }

  .meter text {
    font: bold 7px "Liberation Sans", sans-serif;
    text-anchor: middle;
  }

  .triple {
    display: grid;
    grid-template-columns: repeat(3, 39px);
    gap: 4px 3px;
    margin-left: 3px;
  }

  .bands {
    margin-top: 36px;
  }

  .demods {
    margin-top: 43px;
  }

  .filters {
    margin-top: 65px;
  }

  .line {
    display: flex;
    align-items: center;
    gap: 2px;
    height: 20px;
    color: #fff;
  }

  .width {
    justify-content: space-between;
    margin: 8px 5px 5px 0;
  }

  .width :global(.slider) {
    width: 93px;
  }

  .shift {
    margin-bottom: 4px;
  }

  .shift :global(.slider) {
    width: 66px;
  }

  .shift .pill {
    width: 36px;
    font-size: 10px;
    font-weight: normal;
  }

  .lowhigh {
    gap: 1px;
    height: 17px;
    margin-left: -2px;
    justify-content: space-between;
  }

  .lowhigh :global(.spin) {
    width: 43px;
  }

  /* utility windows */
  .bottom {
    display: flex;
    align-items: flex-start;
    gap: 1px;
    padding: 2px 0 4px;
  }

  .bottom .win {
    border: 1px solid #dcdcdc;
    background: #efefef;
  }

  .bottom header {
    height: 24px;
    padding-right: 7px;
  }

  .bottom h2 {
    padding: 4px 0 0 8px;
    text-align: center;
  }

  .cwmem h2 {
    padding-left: 32px;
  }

  .x {
    width: 15px;
    height: 15px;
    margin-top: 4px;
    background: #aaa;
    color: #fff;
    font: bold 9px/14px "Liberation Sans", sans-serif;
  }

  .panel {
    margin: 0 5px 5px;
    border: 1px solid #ddd;
  }

  .bottom button:not(.x) {
    border: 1px solid #aaa;
    background: #e6e6e6;
  }

  .bottom input[type='text'] {
    border: 1px solid #aaa;
    background: #fff;
  }

  .ddutil {
    width: 377px;
    margin-top: 2px;
  }

  .ddutil .panel {
    height: 143px;
    padding: 3px 0 0 3px;
  }

  .row1 {
    display: flex;
    align-items: center;
    gap: 3px;
    height: 17px;
    padding-left: 62px;
    color: #228;
    font-size: 9px;
  }

  .row1 input {
    width: 37px;
    height: 17px;
  }

  .row1 span {
    width: 16px;
  }

  .row1 span:nth-of-type(2) {
    width: 32px;
  }

  .row1 output {
    width: 29px;
    height: 16px;
    border: 1px solid #888;
    color: #400;
    font-size: 10px;
    line-height: 15px;
    text-align: center;
  }

  .row1 .fault {
    background: #f00;
  }

  .row1 .temp {
    width: 41px;
    margin-right: 2px;
    background: #90ee90;
    color: #030;
  }

  .bottom .row1 .fz {
    width: 21px;
    height: 15px;
    margin-right: 2px;
    background: #ffc0c0;
    color: #222;
    font-weight: bold;
  }

  .row1 .zero {
    width: 23px;
    height: 14px;
    margin-right: 3px;
    color: #e00;
    line-height: 12px;
  }

  .lamp {
    width: 13px;
    height: 13px;
    border: 1px solid #aaa;
  }

  .yel {
    background: #ff0;
  }

  .row2 {
    display: flex;
    margin-top: 3px;
  }

  .row2 fieldset {
    display: flex;
    align-items: center;
    height: 28px;
    margin-top: 3px;
    border: 1px solid #ccc;
  }

  .row2 legend {
    top: -6px;
    left: 5px;
    background: #efefef;
    font: bold 10px/12px "Liberation Sans", sans-serif;
  }

  .stepp {
    width: 241px;
    gap: 5px;
    padding: 5px 4px 0 3px;
    color: #999;
  }

  .stepp label {
    gap: 5px;
    white-space: nowrap;
  }

  input[type='radio'] {
    appearance: none;
    width: 10px;
    height: 10px;
    border: 1px solid #999;
    border-radius: 50%;
  }

  input[type='radio']:checked {
    background: radial-gradient(#888 2px, transparent 2px);
  }

  .dash {
    width: 14px;
    margin-left: 5px;
    border-top: 1px solid #aaa;
  }

  .row2 button {
    height: 17px;
    font-weight: bold;
    font-size: 10px;
  }

  .bottom .stepp .home {
    width: 34px;
    margin-left: auto;
    background: #ffc;
    color: #770;
  }

  .bottom .stepp .cal {
    width: 25px;
    background: #ffdfc0;
    color: #a40;
  }

  .rotor {
    width: 95px;
    gap: 5px;
    margin-left: 3px;
    padding: 1px 0 0 4px;
  }

  .rotor legend {
    color: #a00;
  }

  .rotor input, .rotor button {
    width: 25px;
    height: 16px;
  }

  .rotor button {
    color: #00d;
  }

  .rotor output {
    width: 25px;
    height: 13px;
    border: 1px solid #777;
  }

  .lamps {
    display: grid;
    align-content: start;
    gap: 4px;
    margin: -2px 0 0 3px;
  }

  .lamps i {
    width: 9px;
    height: 9px;
    border: 1px solid #333;
  }

  .lamps .red {
    background: #f00;
  }

  .row3 {
    display: flex;
    gap: 3px;
    margin: 2px 12px 3px 0;
  }

  .row3 input {
    height: 17px;
    color: #228;
    text-align: center;
  }

  .row3 button {
    height: 18px;
    font-weight: bold;
  }

  .w14 { width: 14px; }
  .w31 { width: 31px; }
  .w33 { width: 33px; }
  .w35 { width: 35px; }
  .w37 { width: 37px; }
  .w38 { width: 38px; }
  .w39 { width: 39px; }
  .w42 { width: 41px; }
  .w43 { width: 43px; }
  .w57 { width: 57px; }

  .grn { color: #080; }
  .blu { color: #00e; }
  .drk { color: #a00; }
  .rd { color: #f00; }

  .fkeys {
    display: grid;
    grid-template-columns: repeat(16, 1fr);
    height: 31px;
    margin-right: 5px;
    padding-top: 2px;
    border: 1px solid #ddd;
    color: #00006a;
    font-weight: bold;
    font-size: 9px;
  }

  .fkeys label {
    flex-direction: column;
    gap: 3px;
  }

  .bottom .fkeys button {
    width: 15px;
    height: 9px;
    background: #ffffe0;
  }

  .ontop {
    justify-content: center;
    margin-top: 6px;
    padding-right: 5px;
  }

  .cwmem {
    width: 588px;
  }

  .cwmem .panel {
    height: 146px;
    padding: 6px 9px 0;
  }

  .top {
    display: flex;
    align-items: flex-start;
    height: 39px;
  }

  .top button {
    height: 18px;
  }

  .bars {
    display: grid;
    gap: 4px;
    width: 32px;
    padding-top: 1px;
  }

  .bars i {
    width: 18px;
    height: 9px;
    background: #000;
    border: 1px solid #bbb;
  }

  .top > button {
    margin-right: 8px;
  }

  .wpm, .rep {
    display: grid;
    gap: 3px;
    justify-items: center;
    width: 60px;
    font-size: 10px;
    white-space: nowrap;
  }

  .wpm > span:last-child, .rep > span:last-child {
    font-size: 9px;
  }

  .wpm :global(.spin), .rep :global(.spin) {
    width: 45px;
    background: #fff;
    color: #222;
  }

  .cwmem :global(.spin input) {
    border: 0;
  }

  .top :global(.arrows button) {
    height: 7px;
  }

  .always {
    margin: 2px 0 0 auto;
    width: 129px;
  }

  .mem {
    display: flex;
    gap: 15px;
    height: 17px;
    margin-bottom: 10px;
  }

  .mem div {
    display: flex;
    align-items: center;
    gap: 8px;
    flex: 0 0 170px;
  }

  .mem div:first-child {
    flex-basis: 169px;
  }

  .mem button {
    width: 17px;
    height: 14px;
    line-height: 12px;
  }

  .bottom .mem .focus button:not(.x) {
    border-color: #39f;
    background: #dcecfc;
  }

  .mem input {
    flex: 1;
    width: 0;
    height: 17px;
    padding-left: 2px;
  }

  .mem .short input {
    flex: 0 0 133px;
  }

  .last {
    display: flex;
    align-items: center;
    margin-top: 8px;
    padding-left: 4px;
  }

  .last label {
    width: 87px;
  }

  .last button {
    height: 18px;
    width: 61px;
    margin-right: 18px;
  }

  .last .kbd {
    width: 91px;
    margin-right: 15px;
  }

  .last i {
    width: 19px;
    height: 9px;
    border: 1px solid #aaa;
    border-top-color: #777;
  }

  .last select {
    width: 172px;
    margin: 0 3px 0 auto;
    background-color: #f0f0f0;
    font: 10px "Liberation Mono", monospace;
  }
</style>
